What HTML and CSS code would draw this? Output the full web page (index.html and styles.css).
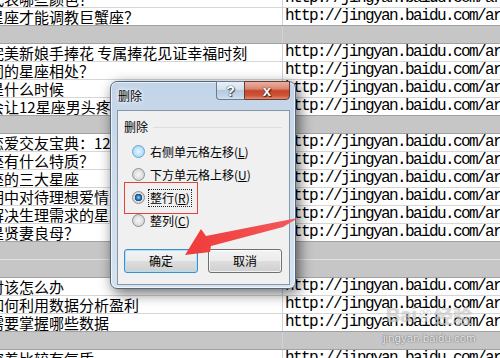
FILE: index.html
```html
<!DOCTYPE html>
<html lang="zh">
<head>
<meta charset="utf-8">
<title>删除</title>
<link rel="stylesheet" href="styles.css">
</head>
<body>
<div class="sheet">
  <div class="row"><div class="c1"><span>代表哪些颜色？</span></div><div class="c2">http://jingyan.baidu.com/article/</div></div>
  <div class="row"><div class="c1"><span>星座才能调教巨蟹座？</span></div><div class="c2">http://jingyan.baidu.com/article/</div></div>
  <div class="row gray"><div class="c1"></div><div class="c2"></div></div>
  <div class="row"><div class="c1"><span>完美新娘手捧花 专属捧花见证幸福时刻</span></div><div class="c2">http://jingyan.baidu.com/article/</div></div>
  <div class="row"><div class="c1"><span>同的星座相处？</span></div><div class="c2">http://jingyan.baidu.com/article/</div></div>
  <div class="row"><div class="c1"><span>是什么时候</span></div><div class="c2">http://jingyan.baidu.com/article/</div></div>
  <div class="row"><div class="c1"><span>会让12星座男头疼</span></div><div class="c2">http://jingyan.baidu.com/article/</div></div>
  <div class="row gray"><div class="c1"></div><div class="c2"></div></div>
  <div class="row"><div class="c1"><span>恋爱交友宝典：12星座</span></div><div class="c2">http://jingyan.baidu.com/article/</div></div>
  <div class="row"><div class="c1"><span>座有什么特质？</span></div><div class="c2">http://jingyan.baidu.com/article/</div></div>
  <div class="row"><div class="c1"><span>座的三大星座</span></div><div class="c2">http://jingyan.baidu.com/article/</div></div>
  <div class="row"><div class="c1"><span>期中对待理想爱情</span></div><div class="c2">http://jingyan.baidu.com/article/</div></div>
  <div class="row"><div class="c1"><span>解决生理需求的星座</span></div><div class="c2">http://jingyan.baidu.com/article/</div></div>
  <div class="row"><div class="c1"><span>是贤妻良母？</span></div><div class="c2">http://jingyan.baidu.com/article/</div></div>
  <div class="row gray"><div class="c1"></div><div class="c2"></div></div>
  <div class="row gray"><div class="c1"></div><div class="c2"></div></div>
  <div class="row"><div class="c1"><span>时该怎么办</span></div><div class="c2">http://jingyan.baidu.com/article/</div></div>
  <div class="row"><div class="c1"><span>如何利用数据分析盈利</span></div><div class="c2">http://jingyan.baidu.com/article/</div></div>
  <div class="row"><div class="c1"><span>需要掌握哪些数据</span></div><div class="c2">http://jingyan.baidu.com/article/</div></div>
  <div class="row gray"><div class="c1"></div><div class="c2"></div></div>
  <div class="row"><div class="c1"><span>穿着比较有气质</span></div><div class="c2">http://jingyan.baidu.com/article/</div></div>
</div>

<div class="watermark">
  <div class="wm-logo"><span class="wm-bai">Bai</span><svg class="wm-paw" viewBox="0 0 16 16" width="15" height="15"><ellipse cx="4" cy="5" rx="1.8" ry="2.4"/><ellipse cx="8" cy="3" rx="1.8" ry="2.4"/><ellipse cx="12" cy="5" rx="1.8" ry="2.4"/><ellipse cx="2.5" cy="9.5" rx="1.6" ry="2"/><path d="M8 8c-3 0-5 4-4 6 1 1.5 3 0.5 4 0.5s3 1 4-0.5c1-2-1-6-4-6z"/></svg><span class="wm-jy">经验</span></div>
  <div class="wm-url">jingyan.baidu.com</div>
</div>

<div class="dialog">
  <div class="titlebar">
    <div class="title">删除</div>
    <div class="caption-btns">
      <div class="cbtn help">?</div>
      <div class="cbtn close">x</div>
    </div>
  </div>
  <div class="client">
    <div class="group-head"><span class="group-label">删除</span><span class="group-line"></span></div>
    <div class="options">
      <div class="opt"><span class="radio hover"></span><span class="opt-text">右侧单元格左移(<u>L</u>)</span></div>
      <div class="opt"><span class="radio"></span><span class="opt-text">下方单元格上移(<u>U</u>)</span></div>
      <div class="opt"><span class="radio checked"></span><span class="opt-text focus">整行(<u>R</u>)</span></div>
      <div class="opt"><span class="radio"></span><span class="opt-text">整列(<u>C</u>)</span></div>
    </div>
    <div class="buttons">
      <div class="btn default">确定</div>
      <div class="btn">取消</div>
    </div>
    <div class="highlight"></div>
  </div>
</div>

<svg class="arrow" width="500" height="358" viewBox="0 0 500 358">
  <defs>
    <linearGradient id="ag" x1="0" y1="0" x2="1" y2="0">
      <stop offset="0" stop-color="#f03a3a"/>
      <stop offset="1" stop-color="#f25a5a"/>
    </linearGradient>
  </defs>
  <polygon points="185,255 201,229 206,236 282,221 298,218 283,227 211,246 210,252" fill="url(#ag)"/>
</svg>
</body>
</html>
```

FILE: styles.css
```css
html, body {
  margin: 0;
  padding: 0;
}
body {
  width: 500px;
  height: 358px;
  overflow: hidden;
  background: #ffffff;
  position: relative;
  color: #000;
}

/* spreadsheet */
.sheet {
  margin-top: -10px;
}
.row {
  display: grid;
  grid-template-columns: 283px 1fr;
  height: 18px;
  box-sizing: border-box;
  border-bottom: 1px solid #d6d6d6;
}
.row:has(+ .gray) {
  border-bottom-color: #a2a2a2;
}
.row.gray {
  background: #c6c6c6;
  border-bottom-color: #a2a2a2;
}
.row.gray:has(+ .gray) {
  border-bottom-color: #e2e2e2;
}
.c1 {
  box-sizing: border-box;
  border-right: 1px solid #d2d2d2;
  overflow: hidden;
  white-space: nowrap;
  font-family: "Noto Sans CJK SC", "Noto Sans", sans-serif;
  font-size: 15px;
  line-height: 17px;
}
.c1 span {
  margin-left: -11px;
}
.c2 {
  padding-left: 2px;
  overflow: hidden;
  white-space: nowrap;
  font-family: "Liberation Mono", monospace;
  font-size: 16px;
  letter-spacing: -1.6px;
  line-height: 17px;
}

/* watermark */
.watermark {
  position: absolute;
  left: 383px;
  top: 302px;
  width: 92px;
  text-align: center;
  font-family: "Liberation Sans", sans-serif;
}
.wm-logo {
  display: flex;
  align-items: center;
  justify-content: center;
  height: 26px;
  color: rgba(255, 255, 255, 0.55);
  text-shadow: 0 0 1px rgba(0, 0, 0, 0.35);
}
.wm-bai {
  font-size: 20px;
  font-weight: bold;
}
.wm-paw {
  fill: rgba(255, 255, 255, 0.5);
  stroke: rgba(0, 0, 0, 0.2);
  stroke-width: 0.6;
  margin: 0 1px;
}
.wm-jy {
  font-family: "Noto Sans CJK SC", sans-serif;
  font-size: 19px;
  font-weight: bold;
}
.wm-url {
  margin-top: 3px;
  font-size: 11.5px;
  line-height: 14px;
  color: rgba(255, 255, 255, 0.9);
  text-shadow: 0 0 1px rgba(0, 0, 0, 0.55), 0 0 2px rgba(0, 0, 0, 0.3);
}

/* dialog */
.dialog {
  position: absolute;
  left: 110px;
  top: 81px;
  width: 186px;
  height: 208px;
  box-sizing: border-box;
  border: 1px solid #55667a;
  border-radius: 7px;
  background: linear-gradient(180deg, #c2d4e8 0%, #cddcec 40%, #d6e2ef 100%);
  box-shadow: inset 0 0 0 1px rgba(255, 255, 255, 0.65), 3px 4px 14px rgba(0, 0, 0, 0.6);
  font-family: "Noto Sans CJK SC", "Noto Sans", sans-serif;
  font-size: 12px;
  display: flex;
  flex-direction: column;
}
.titlebar {
  display: flex;
  justify-content: space-between;
  align-items: flex-start;
  height: 28px;
}
.title {
  padding: 6px 0 0 7px;
  line-height: 16px;
  text-shadow: 0 0 6px #fff, 0 0 3px #fff;
}
.caption-btns {
  display: flex;
  margin-right: 5px;
  margin-top: -1px;
}
.cbtn {
  height: 19px;
  box-sizing: border-box;
  display: flex;
  align-items: center;
  justify-content: center;
  color: #fff;
  font-family: "Liberation Sans", sans-serif;
  font-weight: bold;
}
.help {
  width: 28px;
  border: 1px solid #6a7c90;
  border-right: none;
  border-radius: 0 0 0 4px;
  background: linear-gradient(180deg, #e9f0f8 0%, #d3dfec 45%, #b7c9dd 50%, #c6d6e8 85%, #d8e4f0 100%);
  font-size: 14px;
  text-shadow: 0 0 1px #3a4a5c, 0 0 1px #3a4a5c, 1px 1px 1px #3a4a5c;
}
.close {
  width: 46px;
  border: 1px solid #6a3a34;
  border-radius: 0 0 4px 0;
  background: linear-gradient(180deg, #eab0a2 0%, #da8672 40%, #c64429 52%, #cc5538 80%, #e08f70 100%);
  font-size: 15px;
  text-shadow: 0 0 1px #4a1a12, 0 0 1px #4a1a12, 1px 1px 1px #4a1a12;
}
.client {
  position: relative;
  margin: 0 5px 0 6px;
  height: 175px;
  box-sizing: border-box;
  border: 1px solid #8797a8;
  background: #f0f0f0;
  padding: 8px 7px 0 6px;
}
.group-head {
  display: flex;
  align-items: center;
  height: 16px;
}
.group-label {
  line-height: 16px;
}
.group-line {
  flex: 1;
  height: 1px;
  margin-left: 5px;
  background: #d5dfe5;
}
.options {
  margin-top: 5px;
}
.opt {
  display: flex;
  align-items: center;
  height: 23px;
}
.radio {
  width: 13px;
  height: 13px;
  margin-left: 8px;
  margin-right: 5px;
  box-sizing: border-box;
  border-radius: 50%;
  border: 1px solid #8e8f8f;
  background: radial-gradient(circle at 50% 50%, #f6f6f6 0, #ececec 2px, #d4d4d4 6px);
}
.radio.hover {
  border-color: #5ea6d6;
  background: radial-gradient(circle at 50% 50%, #eaf7ff 0, #d2edfc 2px, #a9d8f4 6px);
}
.radio.checked {
  background:
    radial-gradient(circle at 50% 50%, #9ad6ff 0, #2e7fc4 2px, #14497f 3.5px, rgba(20, 73, 127, 0) 4px),
    radial-gradient(circle at 50% 50%, #f6f6f6 0, #ececec 2px, #d4d4d4 6px);
}
.opt-text {
  line-height: 16px;
}
.opt-text u {
  text-underline-offset: 1px;
}
.opt-text.focus {
  line-height: 14px;
  outline: 1px dotted #222;
  outline-offset: 1px;
}
.buttons {
  display: flex;
  gap: 10px;
  margin-top: 17px;
}
.btn {
  width: 74px;
  height: 24px;
  box-sizing: border-box;
  border: 1px solid #707070;
  border-radius: 3px;
  background: linear-gradient(180deg, #f3f3f3 0%, #ebebeb 48%, #dddddd 52%, #cfcfcf 100%);
  box-shadow: inset 0 0 0 1px rgba(255, 255, 255, 0.7);
  display: flex;
  align-items: center;
  justify-content: center;
  line-height: 16px;
}
.btn.default {
  border-color: #3c8fcc;
  box-shadow: inset 0 0 0 1px #aee0f8;
}
.highlight {
  position: absolute;
  left: 6px;
  top: 71px;
  width: 74px;
  height: 32px;
  box-sizing: border-box;
  border: 1px solid #e5413b;
}

/* annotation arrow */
.arrow {
  position: absolute;
  left: 0;
  top: 0;
  pointer-events: none;
}
```
